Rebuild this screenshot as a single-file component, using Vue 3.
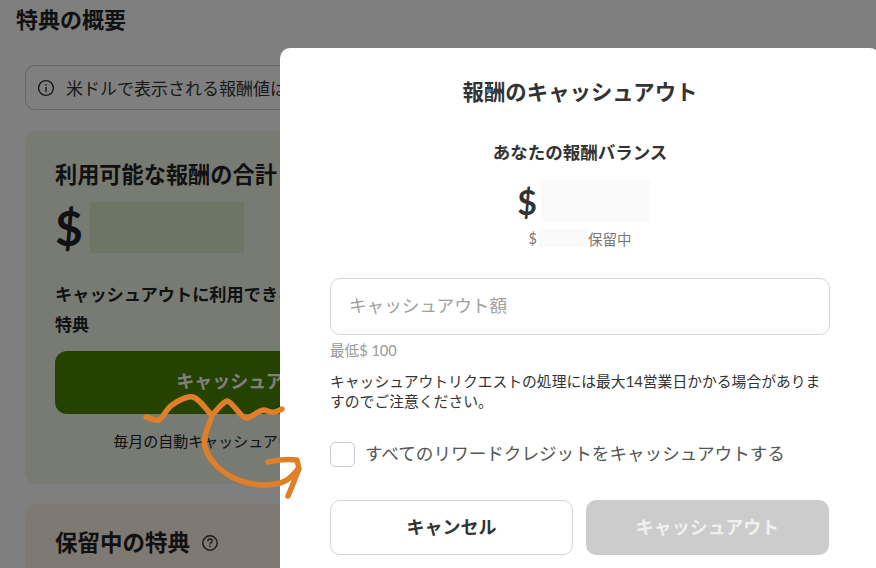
<script setup>
// 背景ページと報酬キャッシュアウトのモーダル
const scribble = [
  "M146 417 C151 418 155 422 159 420 C163 418 166 409 172 405 C179 400 188 396 193 397 C200 399 207 411 212 415 C216 412 222 402 227 401 C232 401 240 417 246 418 C252 418 258 410 264 410 C269 411 272 413 275 412 C278 411 280 410 282 409",
  "M211 419 C207 429 203 438 205 447 C208 459 220 472 236 479 C250 485 270 488 285 481 C291 478 295 473 298 469",
  "M268 462 C276 460 288 459 297 460 L299 469 C295 478 292 487 288 496",
];
</script>

<template>
  <div class="screen">
    <!-- 背景のページ -->
    <div class="page">
      <h1 class="page-title">特典の概要</h1>
      <div class="body">
        <div class="info">
          <svg class="info-icon" width="18" height="18" viewBox="0 0 18 18" fill="none">
            <circle cx="9" cy="9" r="7.4" stroke="#333" stroke-width="1.4" />
            <rect x="8.3" y="8" width="1.4" height="5" fill="#333" />
            <rect x="8.3" y="5.2" width="1.4" height="1.5" fill="#333" />
          </svg>
          <span>米ドルで表示される報酬値は概算です</span>
        </div>
        <section class="card green">
          <h2 class="card-title">利用可能な報酬の合計</h2>
          <div class="amount">
            <span class="dollar">$</span>
            <span class="mask"></span>
          </div>
          <p class="avail">キャッシュアウトに利用できる</p>
          <p class="avail-sub">特典</p>
          <button class="main-btn">キャッシュアウト</button>
          <p class="auto">毎月の自動キャッシュアウトを設定する</p>
        </section>
        <section class="card pending">
          <h2 class="pending-title">
            保留中の特典
            <svg width="18" height="18" viewBox="0 0 18 18" fill="none">
              <circle cx="9" cy="9" r="7.2" stroke="#333" stroke-width="1.4" />
              <path d="M6.8 7.2 C6.8 5.8 7.8 5 9 5 C10.3 5 11.2 5.8 11.2 7 C11.2 8.4 9 8.6 9 10.4" stroke="#333" stroke-width="1.4" />
              <rect x="8.3" y="11.6" width="1.4" height="1.5" fill="#333" />
            </svg>
          </h2>
        </section>
      </div>
    </div>

    <div class="backdrop"></div>

    <!-- モーダル -->
    <div class="modal">
      <h2 class="modal-title">報酬のキャッシュアウト</h2>
      <h3 class="balance-title">あなたの報酬バランス</h3>
      <div class="balance">
        <span class="balance-dollar">$</span>
        <span class="balance-mask"></span>
      </div>
      <div class="hold">
        <span>$</span>
        <span class="hold-mask"></span>
        <span>保留中</span>
      </div>
      <input class="amount-input" type="text" placeholder="キャッシュアウト額" />
      <p class="min">最低$ 100</p>
      <p class="notice">キャッシュアウトリクエストの処理には最大14営業日かかる場合がありますのでご注意ください。</p>
      <label class="check">
        <span class="box"></span>
        <span>すべてのリワードクレジットをキャッシュアウトする</span>
      </label>
      <div class="actions">
        <button class="cancel">キャンセル</button>
        <button class="submit" disabled>キャッシュアウト</button>
      </div>
    </div>

    <!-- 手書きの矢印 -->
    <svg class="scribble" width="876" height="568" viewBox="0 0 876 568" fill="none">
      <path v-for="d in scribble" :key="d" :d="d" stroke="#e07f28" stroke-width="5.5" stroke-linecap="round" stroke-linejoin="round" />
    </svg>
  </div>
</template>

<style>
html,
body {
  margin: 0;
  background: #fff;
}
</style>

<style scoped>
.screen {
  position: relative;
  width: 876px;
  height: 568px;
  overflow: hidden;
  background: #fff;
  font-family: Lato, "Noto Sans CJK JP", sans-serif;
  color: #222;
}
h1,
h2,
h3,
p {
  margin: 0;
}
.page-title {
  padding: 6px 0 0 16px;
  font-size: 22px;
  line-height: 28px;
  font-weight: 700;
}
.body {
  padding: 31px 0 0 25px;
  width: 446px;
}
.info {
  display: flex;
  align-items: center;
  gap: 11px;
  box-sizing: border-box;
  width: 446px;
  height: 45px;
  padding-left: 11px;
  border: 1px solid #ccc;
  border-radius: 10px;
  font-size: 17px;
  color: #333;
}
.card {
  margin-top: 21px;
  border-radius: 12px;
  padding: 0 30px;
}
.green {
  height: 353px;
  background: #eff6e8;
  box-sizing: border-box;
  padding-top: 29px;
}
.card-title {
  font-size: 22.2px;
  line-height: 30px;
}
.amount {
  display: flex;
  align-items: center;
  gap: 7px;
  height: 51px;
  margin-top: 12px;
}
.dollar {
  font-size: 48px;
  font-weight: 700;
}
.mask {
  width: 154px;
  height: 51px;
  background: #dbecc8;
}
.avail {
  margin-top: 30px;
  font-size: 17.2px;
  line-height: 24px;
  font-weight: 700;
}
.avail-sub {
  margin-top: 6px;
  font-size: 17px;
  line-height: 24px;
  font-weight: 700;
}
.main-btn {
  display: block;
  width: 100%;
  height: 63px;
  margin-top: 14px;
  padding: 0 0 5px;
  border: none;
  border-radius: 12px;
  background: #4c8400;
  color: #fff;
  font: inherit;
  font-size: 18px;
  font-weight: 700;
}
.auto {
  margin-top: 16px;
  text-align: center;
  font-size: 15px;
  line-height: 22px;
}
.pending {
  margin-top: 20px;
  height: 120px;
  background: #fff3e6;
  box-sizing: border-box;
  padding-top: 23px;
}
.pending-title {
  display: flex;
  align-items: center;
  gap: 11px;
  font-size: 22.5px;
  line-height: 32px;
}
.backdrop {
  position: absolute;
  inset: 0;
  background: rgba(0, 0, 0, 0.5);
}
.modal {
  position: absolute;
  left: 280px;
  top: 48px;
  box-sizing: border-box;
  width: 600px;
  height: 540px;
  padding: 28px 50px 0;
  background: #fff;
  border-radius: 10px;
  color: #333;
}
.modal-title {
  text-align: center;
  font-size: 21.4px;
  line-height: 32px;
}
.balance-title {
  margin-top: 33px;
  text-align: center;
  font-size: 17.5px;
  line-height: 24px;
}
.balance {
  display: flex;
  justify-content: center;
  align-items: center;
  gap: 4px;
  margin-top: 15px;
  padding-left: 7px;
  height: 42px;
}
.balance-dollar {
  font-size: 34px;
  font-weight: 700;
}
.balance-mask {
  width: 109px;
  height: 42px;
  background: #fafafa;
}
.hold {
  display: flex;
  justify-content: center;
  align-items: center;
  gap: 1px;
  height: 18px;
  margin-top: 7px;
  font-size: 14.5px;
  color: #777;
}
.hold-mask {
  width: 49px;
  height: 18px;
  background: #fafafa;
}
.amount-input {
  display: block;
  box-sizing: border-box;
  width: 100%;
  height: 57px;
  margin-top: 31px;
  padding: 0 18px 3px;
  border: 1px solid #d5d5d5;
  border-radius: 10px;
  font: inherit;
  font-size: 17.6px;
}
.amount-input::placeholder {
  color: #a0a0a0;
}
.min {
  margin-top: 6px;
  font-size: 14.6px;
  line-height: 20px;
  color: #999;
}
.notice {
  margin-top: 10px;
  font-size: 14.8px;
  line-height: 20px;
  color: #333;
}
.check {
  display: flex;
  align-items: center;
  gap: 10px;
  margin-top: 30px;
  font-size: 17.6px;
  line-height: 26px;
  color: #555;
}
.box {
  box-sizing: border-box;
  width: 25px;
  height: 25px;
  border: 1px solid #ccc;
  border-radius: 5px;
}
.actions {
  display: flex;
  gap: 13px;
  margin-top: 33px;
}
.actions button {
  box-sizing: border-box;
  width: 243px;
  height: 55px;
  padding: 0 0 3px;
  border-radius: 10px;
  font: inherit;
  font-size: 18px;
  font-weight: 700;
}
.cancel {
  border: 1px solid #d5d5d5;
  background: #fff;
  color: #333;
}
.submit {
  border: none;
  background: #ccc;
  color: #f0f0f0;
}
.scribble {
  position: absolute;
  left: 0;
  top: 0;
  pointer-events: none;
}
</style>
